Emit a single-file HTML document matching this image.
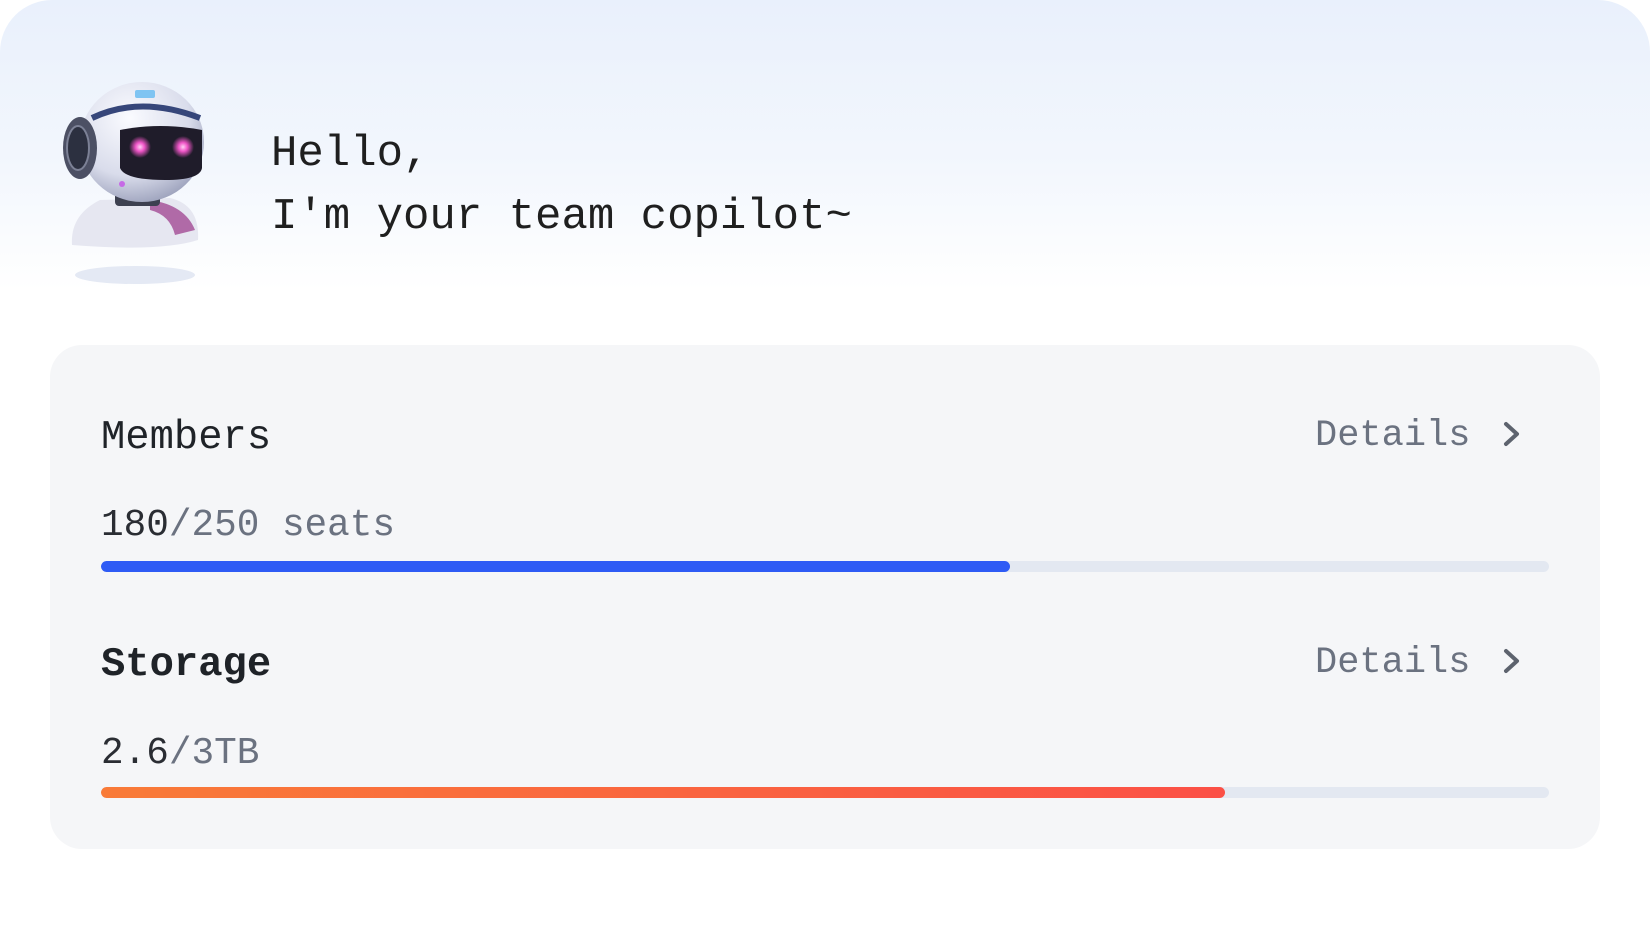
<!DOCTYPE html>
<html><head><meta charset="utf-8"><style>
html,body{margin:0;padding:0;width:1650px;height:940px;overflow:hidden;background:#fff;}
.wrap{position:absolute;left:0;top:0;width:1650px;height:940px;border-radius:52px;background:linear-gradient(180deg,#e9f0fc 0px,#f3f7fd 170px,#ffffff 290px,#ffffff 100%);}
.mono{font-family:"Liberation Mono","DejaVu Sans Mono",monospace;}
.t{position:absolute;white-space:pre;line-height:1;}
.card{position:absolute;left:50px;top:345px;width:1550px;height:504px;background:#f5f6f8;border-radius:32px;}
.bar{position:absolute;left:101px;width:1448px;height:11px;border-radius:6px;background:#e3e8f1;overflow:hidden;}
.fill{position:absolute;left:0;top:0;height:100%;border-radius:6px;}
</style></head><body>
<div class="wrap"></div>
<svg style="position:absolute;left:0;top:0" width="260" height="300">
<defs>
<radialGradient id="hd" cx="0.4" cy="0.3" r="0.8"><stop offset="0" stop-color="#fafbff"/><stop offset="0.6" stop-color="#d9dceb"/><stop offset="1" stop-color="#8d93b0"/></radialGradient>
<radialGradient id="ey" cx="0.5" cy="0.5" r="0.5"><stop offset="0" stop-color="#ffd0f4"/><stop offset="0.4" stop-color="#f056c8"/><stop offset="1" stop-color="#f056c8" stop-opacity="0"/></radialGradient>
</defs>
<ellipse cx="135" cy="275" rx="60" ry="9" fill="#e4e9f4"/>
<path d="M72 245 Q70 215 100 200 L170 198 Q200 205 198 240 Q160 252 72 245Z" fill="#e6e7f1"/>
<path d="M150 200 Q185 205 195 230 L175 235 Q170 215 150 210Z" fill="#b06aa7"/>
<rect x="115" y="192" width="45" height="14" rx="4" fill="#3d4050"/>
<ellipse cx="142" cy="142" rx="62" ry="60" fill="url(#hd)"/>
<path d="M92 118 Q140 95 200 118" stroke="#36467a" stroke-width="6" fill="none"/>
<rect x="135" y="90" width="20" height="8" rx="2" fill="#7fc4f2"/>
<ellipse cx="80" cy="148" rx="17" ry="31" fill="#4c5064"/>
<ellipse cx="78" cy="148" rx="11" ry="22" fill="#2c3040" stroke="#7c8196" stroke-width="2"/>
<path d="M120 130 Q160 122 202 130 L202 168 Q200 180 165 180 Q125 180 120 168Z" fill="#1f1c2a"/>
<circle cx="140" cy="147" r="11" fill="url(#ey)"/>
<circle cx="183" cy="147" r="11" fill="url(#ey)"/>
<circle cx="122" cy="184" r="3" fill="#c66ae6"/>
</svg>
<div class="t mono" style="left:271px;top:132px;font-size:44px;color:#1f1f1f;">Hello,</div>
<div class="t mono" style="left:271px;top:195px;font-size:44px;color:#1f1f1f;">I'm your team copilot~</div>
<div class="card"></div>
<div class="t mono" style="left:101px;top:418px;font-size:40.5px;color:#1f2328;">Members</div>
<div class="t mono" style="left:1315px;top:418px;font-size:37px;color:#6b7280;">Details</div>
<svg style="position:absolute;left:1500px;top:420px" width="26" height="28"><path d="M6 4 L17 14 L6 24" stroke="#5d636e" stroke-width="4" fill="none" stroke-linecap="round" stroke-linejoin="round"/></svg>
<div class="t mono" style="left:101px;top:508px;font-size:37.7px;color:#6b7280;"><span style="color:#2a2d33">180</span>/250 seats</div>
<div class="bar" style="top:561px"><div class="fill" style="width:909px;background:#2e5bf5"></div></div>
<div class="t mono" style="left:101px;top:645px;font-size:40.5px;color:#1f2328;font-weight:bold;">Storage</div>
<div class="t mono" style="left:1315px;top:645px;font-size:37px;color:#6b7280;">Details</div>
<svg style="position:absolute;left:1500px;top:647px" width="26" height="28"><path d="M6 4 L17 14 L6 24" stroke="#5d636e" stroke-width="4" fill="none" stroke-linecap="round" stroke-linejoin="round"/></svg>
<div class="t mono" style="left:101px;top:736px;font-size:37.7px;color:#6b7280;"><span style="color:#2a2d33">2.6</span>/3TB</div>
<div class="bar" style="top:787px"><div class="fill" style="width:1124px;background:linear-gradient(90deg,#f97b38,#fb5046)"></div></div>
</body></html>
